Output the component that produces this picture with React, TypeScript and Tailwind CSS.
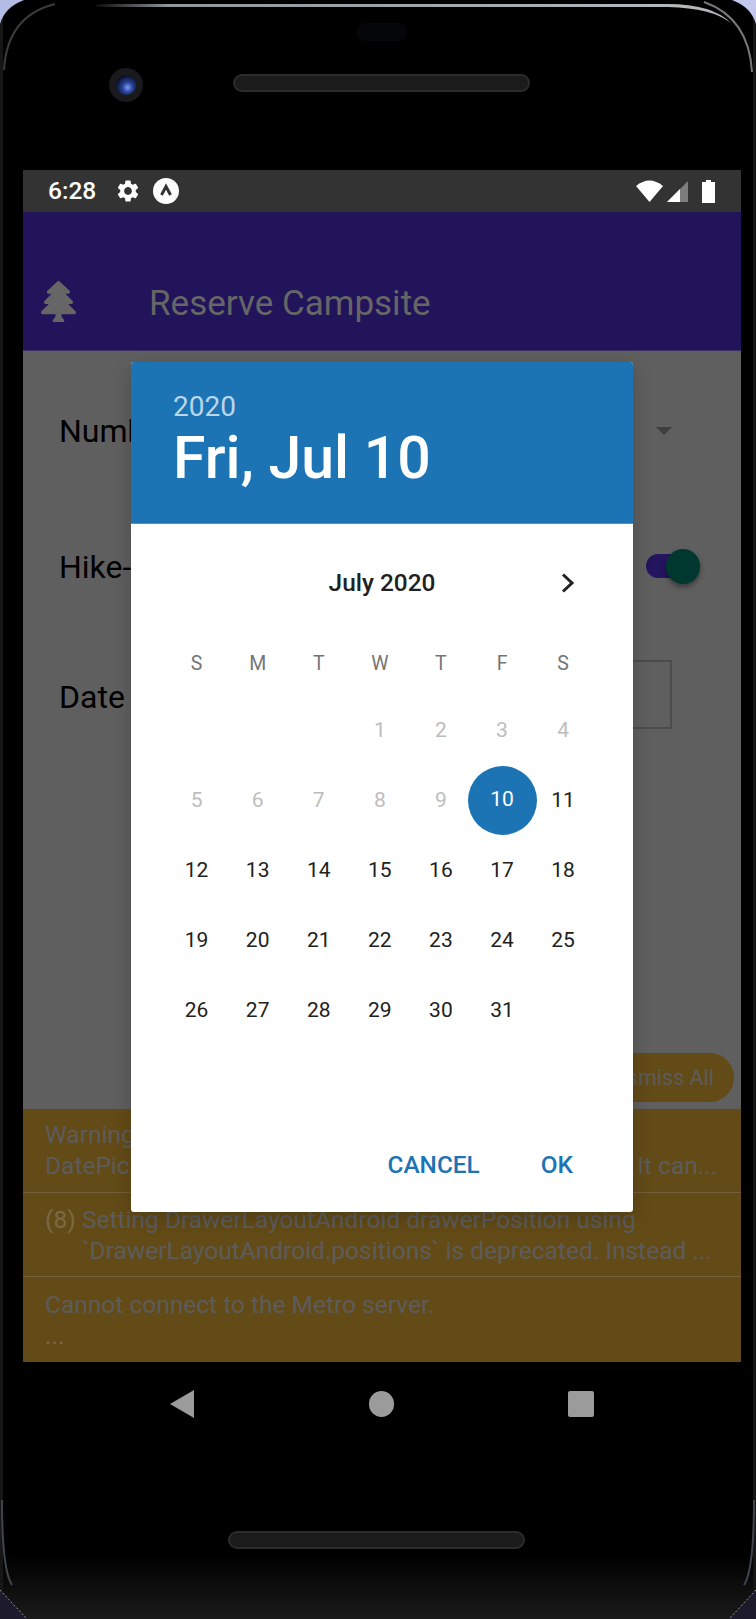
import React from "react";
import { FaTree } from "react-icons/fa";
import { MdSettings } from "react-icons/md";

const disabledDays = ["1", "2", "3", "4", "5", "6", "7", "8", "9"];
const weeks = [
  ["", "", "", "1", "2", "3", "4"],
  ["5", "6", "7", "8", "9", "10", "11"],
  ["12", "13", "14", "15", "16", "17", "18"],
  ["19", "20", "21", "22", "23", "24", "25"],
  ["26", "27", "28", "29", "30", "31", ""],
];

function Speaker({ className }: { className: string }) {
  return (
    <div className={`h-[18px] w-[297px] rounded-[9px] border-2 border-[#2c2c2c] bg-[#1b1b1b] ${className}`} />
  );
}

function Day({ d }: { d: string }) {
  if (d === "10") {
    return (
      <div className="flex h-[70px] items-center justify-center">
        <div className="flex h-[69px] w-[69px] shrink-0 -translate-y-[1px] items-center justify-center rounded-full bg-[#1c74b4] text-white">{d}</div>
      </div>
    );
  }
  const off = disabledDays.includes(d);
  return (
    <div className={`flex h-[70px] items-center justify-center ${off ? "text-[#bdbdbd]" : "text-[#212121]"}`}>{d}</div>
  );
}

function FrameLines() {
  return (
    <svg className="pointer-events-none absolute left-0 top-0" width="756" height="1619" viewBox="0 0 756 1619" fill="none">
      <defs>
        <linearGradient id="hl" x1="90" x2="740" y1="0" y2="0" gradientUnits="userSpaceOnUse">
          <stop offset="0" stopColor="#000" />
          <stop offset="0.12" stopColor="#8f969c" />
          <stop offset="1" stopColor="#b6bcc0" />
        </linearGradient>
      </defs>
      <path d="M0 0 H24 Q5 7 0 24 Z" fill="#b4bce6" />
      <path d="M756 0 H732 Q751 7 756 24 Z" fill="#c4c8ee" />
      <path d="M0 1619 H27 L0 1590 Z" fill="#1d1b2b" />
      <path d="M756 1619 H729 L756 1590 Z" fill="#1d1b2b" />
      <path d="M0 1590 L27 1619" stroke="#9a9a9a" strokeWidth="1" strokeDasharray="2 2" />
      <path d="M756 1590 L729 1619" stroke="#9a9a9a" strokeWidth="1" strokeDasharray="2 2" />
      <path d="M96 4 H668 Q712 4 731 23 Q712 8 668 7 H96 Z" fill="url(#hl)" />
      <path d="M4 70 Q7 16 55 4" stroke="#3c3c3c" strokeWidth="2" />
      <path d="M752 72 Q749 18 704 2" stroke="#777777" strokeWidth="2" />
      <path d="M2 1500 Q2 1570 12 1585" stroke="#3d454d" strokeWidth="2" />
      <path d="M754 1500 Q754 1570 744 1585" stroke="#3d454d" strokeWidth="2" />
    </svg>
  );
}

export default function App() {
  return (
    <div
      className="relative h-[1619px] w-[756px] overflow-hidden bg-black"
      style={{ fontFamily: "Roboto, sans-serif" }}
    >
      <div className="flex h-full w-full flex-col border-x-[3px] border-[#161616] bg-black">
        {/* Top bezel */}
        <div className="h-[170px] shrink-0 pt-[23px]">
          <div className="mx-auto h-[18px] w-[51px] translate-x-[3px] rounded-[9px] bg-[#05060a]" />
          <div className="mt-[25px] flex items-center pl-[106px]">
            <div className="flex h-[34px] w-[34px] translate-y-[2px] items-center justify-center rounded-full bg-[#1a1a1d]">
              <div className="h-[20px] w-[20px] rounded-full bg-[radial-gradient(circle_at_58%_62%,#7f9cf0_0%,#27439a_30%,#0a0e28_70%)]" />
            </div>
            <Speaker className="ml-[90px]" />
          </div>
        </div>

        {/* Screen */}
        <div className="relative ml-[20px] flex h-[1192px] w-[718px] shrink-0 flex-col overflow-hidden">
          <div className="flex h-[42px] shrink-0 items-center bg-[#333333] pl-[25px] pr-[26px] text-white">
            <span className="w-[47px] text-[24.5px] font-medium leading-none">6:28</span>
            <MdSettings className="ml-[20px] h-[26px] w-[26px]" />
            <svg className="ml-[12px]" width="26" height="26" viewBox="0 0 26 26">
              <circle cx="13" cy="13" r="13" fill="#fff" />
              <path d="M8.5 17 L13 8.5 L17.5 17" stroke="#333" strokeWidth="3" fill="none" />
            </svg>
            <div className="flex-1" />
            <svg width="27" height="22" viewBox="0 0 27 22">
              <path d="M0 6 Q13.5 -5 27 6 L13.5 22 Z" fill="#fff" />
            </svg>
            <svg className="ml-[4px]" width="21" height="21" viewBox="0 0 21 21">
              <path d="M0 21 L21 0 V21 Z" fill="#7d7d7d" />
              <path d="M0 21 L13 8 V21 Z" fill="#fff" />
            </svg>
            <svg className="ml-[14px]" width="13" height="23" viewBox="0 0 13 23">
              <path d="M4 0 H9 V2 H13 V23 H0 V2 H4 Z" fill="#fff" />
            </svg>
          </div>

          <div className="flex h-[139px] shrink-0 items-end border-b border-[#3a3166] bg-[#21145a] pb-[23px] pl-[18px]">
            <FaTree preserveAspectRatio="none" className="mb-[5px] h-[41px] w-[35px] text-[#666666]" />
            <span className="ml-[73px] text-[35px] leading-[46px] text-[#666666]">Reserve Campsite</span>
          </div>

          {/* Form behind the dialog */}
          <div className="flex h-[758px] shrink-0 flex-col bg-[#5f5f5f] pl-[36px] pr-[69px] text-[32px] leading-[36px] text-black">
            <div className="mt-[62px] flex items-center justify-between">
              <span>Number of Campers</span>
              <div className="h-0 w-0 border-x-[8px] border-t-[8px] border-x-transparent border-t-[#3f3f3f]" />
            </div>
            <div className="relative mt-[100px] flex items-center justify-between">
              <span>Hike-In/Out?</span>
              <div className="-mr-[28px] flex -translate-y-[1px] items-center">
                <div className="h-[24px] w-[40px] rounded-full bg-[#24155f]" />
                <div className="-ml-[20px] h-[35px] w-[34px] rounded-full bg-[#00382f] shadow-[0_3px_5px_rgba(0,0,0,0.4)]" />
              </div>
            </div>
            <div className="mt-[77px] flex items-center justify-between">
              <span>Date</span>
              <div className="h-[69px] w-[200px] -translate-y-[2px] border-2 border-[#4c4c4c]" />
            </div>
            <div className="flex-1" />
            <div className="-mr-[62px] mb-[7px] flex justify-end">
              <div className="flex h-[49px] items-center rounded-full bg-[#634b17] px-[20px] text-[21.5px] text-[#5c5c5c]">Dismiss All</div>
            </div>
          </div>

          {/* Warnings */}
          <div className="flex flex-1 flex-col bg-[#634b17] text-[24.5px] leading-[31px] text-[#5c5c5c]">
            <div className="h-[84px] shrink-0 border-b border-[#72603a] pl-[22px] pt-[10px] whitespace-nowrap">
              <div>Warning: DatePickerAndroid has been merged with</div>
              <div>DatePickerIOS and will be removed in a future release. It can...</div>
            </div>
            <div className="flex h-[84px] shrink-0 border-b border-[#72603a] pl-[22px] pt-[11px] whitespace-nowrap">
              <span className="w-[37px] text-[#7a6a45]">(8)</span>
              <div>
                <div>Setting DrawerLayoutAndroid drawerPosition using</div>
                <div>`DrawerLayoutAndroid.positions` is deprecated. Instead ...</div>
              </div>
            </div>
            <div className="pl-[22px] pt-[12px] whitespace-nowrap">
              <div>Cannot connect to the Metro server.</div>
              <div className="text-[#7a6a45]">...</div>
            </div>
          </div>

          {/* Dialog */}
          <div className="absolute left-[108px] top-[192px] flex h-[850px] w-[502px] flex-col overflow-hidden rounded-[3px] bg-white shadow-[0_6px_20px_rgba(0,0,0,0.2)]">
            <div className="flex h-[162px] shrink-0 flex-col border-b border-[#4a94cc] bg-[#1c74b4] pl-[42px] pt-[28px]">
              <span className="text-[28px] leading-[34px] text-[#bbd5e9]">2020</span>
              <span className="text-[59px] font-medium leading-[68px] text-white">Fri, Jul 10</span>
            </div>
            <div className="relative mt-[39px] flex h-[40px] shrink-0 items-center justify-center">
              <span className="text-[24.4px] font-medium text-[#212121]">July 2020</span>
              <svg className="absolute left-[430px] top-[10px]" width="14" height="20" viewBox="0 0 14 20">
                <path d="M2 1.5 L11 10 L2 18.5" stroke="#212121" strokeWidth="3" fill="none" />
              </svg>
            </div>
            <div className="mt-[43px] grid grid-cols-[repeat(7,61.1px)] pl-[35px] text-center text-[19.5px] leading-[36px] text-[#757575]">
              {["S", "M", "T", "W", "T", "F", "S"].map((d, i) => (
                <div key={i}>{d}</div>
              ))}
            </div>
            <div className="mt-[14px] grid grid-cols-[repeat(7,61.1px)] pl-[35px] text-center text-[21px]">
              {weeks.flat().map((d, i) => (
                <Day key={i} d={d} />
              ))}
            </div>
            <div className="flex-1" />
            <div className="mb-[32px] flex justify-end pr-[60px] text-[24.4px] font-medium leading-[30px] text-[#1c74b4]">
              <span>CANCEL</span>
              <span className="ml-[61px]">OK</span>
            </div>
          </div>
        </div>

        {/* Bottom bezel */}
        <div className="flex flex-1 flex-col items-center bg-[linear-gradient(180deg,#000_0%,#000_75%,#1a1a1a_100%)]">
          <div className="mt-[28px] flex h-[28px] w-[424px] translate-x-[4px] items-center justify-between">
            <svg width="24" height="28" viewBox="0 0 24 28">
              <path d="M24 0 V28 L0 14 Z" fill="#9b9b9b" />
            </svg>
            <div className="h-[26px] w-[25px] rounded-full bg-[#9b9b9b]" />
            <div className="h-[26px] w-[26px] rounded-[2px] bg-[#9b9b9b]" />
          </div>
          <Speaker className="mt-[113px] -translate-x-[2px]" />
        </div>
      </div>
      <FrameLines />
    </div>
  );
}
